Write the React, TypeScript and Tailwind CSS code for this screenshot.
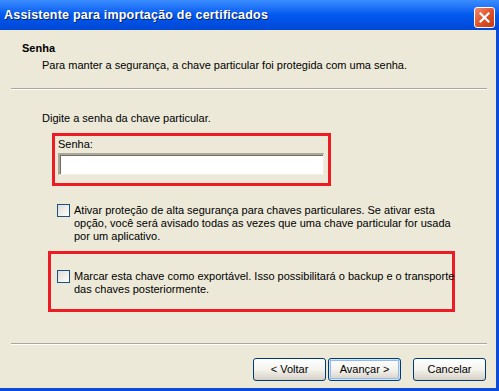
import React from "react";

const F = { fontFamily: '"Liberation Sans", Arial, sans-serif' };

function Checkbox() {
  return (
    <div className="w-[13px] h-[13px] shrink-0 border border-[#1C5180] bg-gradient-to-br from-[#DCDCD7] to-[#FFFFFF]" />
  );
}

function Btn({ label, def }: { label: string; def?: boolean }) {
  return (
    <div
      className={
        "w-[73px] h-[23px] rounded-[3px] border border-[#003C74] bg-gradient-to-b from-[#FFFFFF] via-[#F4F3EE] to-[#D6D0C5] flex items-center justify-center text-[11px] text-black " +
        (def ? "shadow-[inset_0_0_0_1px_#CEE7FF,inset_0_0_0_2px_#98B8EA]" : "")
      }
    >
      {label}
    </div>
  );
}

export default function App() {
  return (
    <div className="w-[499px] h-[391px] flex flex-col overflow-hidden" style={F}>
      {/* Title bar */}
      <div className="h-[30px] shrink-0 flex items-center justify-between pl-[4px] pr-[4px] bg-gradient-to-b from-[#3A8CFF] via-[#0058EE] to-[#0047D6]">
        <span className="text-white font-bold text-[12.5px] tracking-[0.2px] [text-shadow:1px_1px_0_#0A246A] whitespace-nowrap">
          Assistente para importação de certificados
        </span>
        <div className="w-[21px] h-[21px] mt-[5px] rounded-[3px] border border-white bg-gradient-to-br from-[#F08A6A] via-[#E0522D] to-[#C23A17] flex items-center justify-center">
          <svg width="13" height="13" viewBox="0 0 13 13">
            <path d="M2.5 2.5 L10.5 10.5 M10.5 2.5 L2.5 10.5" stroke="white" strokeWidth="2.2" strokeLinecap="square" />
          </svg>
        </div>
      </div>

      {/* Body */}
      <div className="flex-1 flex flex-col bg-[#ECE9D8] border-r-[3px] border-b-[3px] border-[#0A4BDA] text-[11px] leading-[13px] text-black">
        <div className="ml-[22px] mt-[12px] font-bold">Senha</div>
        <div className="ml-[42px] mt-[4px] whitespace-nowrap">
          Para manter a segurança, a chave particular foi protegida com uma senha.
        </div>
        <div className="ml-[11px] w-[476px] mt-[16px] h-[2px] border-t border-[#ACA899] border-b border-b-white" />

        <div className="ml-[42px] mt-[22px]">Digite a senha da chave particular.</div>

        <div className="ml-[52px] mt-[8px] w-[279px] h-[53px] border-[3px] border-[#ED1C24] pl-[3px] pt-[2px] flex flex-col">
          <div>Senha:</div>
          <div className="mt-[2px] w-[266px] h-[22px] bg-white border-t-2 border-l-2 border-t-[#ACA899] border-l-[#ACA899] border-b border-r border-b-[#F1EFE2] border-r-[#F1EFE2] shadow-[inset_1px_1px_0_#716F64]" />
        </div>

        <div className="ml-[57px] mt-[18px] flex gap-[4px]">
          <Checkbox />
          <div className="flex flex-col whitespace-nowrap">
            <span>Ativar proteção de alta segurança para chaves particulares. Se ativar esta</span>
            <span>opção, você será avisado todas as vezes que uma chave particular for usada</span>
            <span>por um aplicativo.</span>
          </div>
        </div>

        <div className="ml-[48px] mt-[8px] w-[407px] h-[61px] border-[3px] border-[#ED1C24] pl-[6px] pt-[16px]">
          <div className="flex gap-[4px]">
            <Checkbox />
            <div className="flex flex-col whitespace-nowrap">
              <span>Marcar esta chave como exportável. Isso possibilitará o backup e o transporte</span>
              <span>das chaves posteriormente.</span>
            </div>
          </div>
        </div>

        <div className="ml-[11px] w-[476px] mt-[31px] h-[2px] border-t border-[#ACA899] border-b border-b-white" />

        <div className="mt-[13px] flex justify-end pr-[10px]">
          <Btn label="< Voltar" />
          <div className="ml-[2px]">
            <Btn label="Avançar >" def />
          </div>
          <div className="ml-[12px]">
            <Btn label="Cancelar" />
          </div>
        </div>
      </div>
    </div>
  );
}
